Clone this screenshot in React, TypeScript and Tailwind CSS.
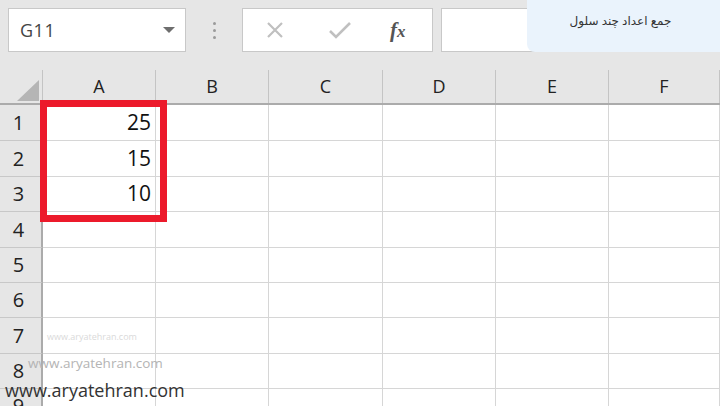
import React from "react";

const cols = [
  { l: "A", w: "w-[113px]" },
  { l: "B", w: "w-[113px]" },
  { l: "C", w: "w-[114px]" },
  { l: "D", w: "w-[113px]" },
  { l: "E", w: "w-[113px]" },
  { l: "F", w: "flex-1" },
];

const rows = [
  { n: "1", h: "h-[36px]", v: "25" },
  { n: "2", h: "h-[36px]", v: "15" },
  { n: "3", h: "h-[35px]", v: "10" },
  { n: "4", h: "h-[36px]", v: "" },
  { n: "5", h: "h-[35px]", v: "" },
  { n: "6", h: "h-[35px]", v: "" },
  { n: "7", h: "h-[36px]", v: "" },
  { n: "8", h: "h-[35px]", v: "" },
  { n: "9", h: "h-[35px]", v: "" },
];

export default function App() {
  return (
    <div
      className="relative w-[720px] h-[406px] overflow-hidden bg-white"
      style={{ fontFamily: '"Open Sans", "Noto Sans", sans-serif' }}
    >
      {/* toolbar */}
      <div className="h-[70px] bg-[#e6e6e6] flex items-start pt-[8px]">
        <div className="ml-[8px] w-[178px] h-[44px] bg-white border border-[#c8c8c8] flex items-center pl-[11px] pr-[10px]">
          <span className="text-[18px] text-[#444] tracking-[0.5px]">G11</span>
          <div className="ml-auto w-0 h-0 border-l-[6px] border-r-[6px] border-t-[6px] border-l-transparent border-r-transparent border-t-[#6e6e6e]" />
        </div>
        <div className="w-[56px] h-[44px] flex flex-col items-center justify-center gap-[4px]">
          <div className="w-[3px] h-[3px] rounded-full bg-[#9a9a9a]" />
          <div className="w-[3px] h-[3px] rounded-full bg-[#9a9a9a]" />
          <div className="w-[3px] h-[3px] rounded-full bg-[#9a9a9a]" />
        </div>
        <div className="w-[191px] h-[44px] bg-white border border-[#c8c8c8] flex items-center">
          <svg className="ml-[23px]" width="18" height="18" viewBox="0 0 18 18">
            <path d="M2 2 L16 16 M16 2 L2 16" stroke="#c0c0c0" strokeWidth="2.2" fill="none" />
          </svg>
          <svg className="ml-[44px]" width="24" height="20" viewBox="0 0 24 20">
            <path d="M2 11 L8 17 L22 3" stroke="#c0c0c0" strokeWidth="2.6" fill="none" />
          </svg>
          <span
            className="ml-[38px] text-[21px] italic font-bold text-[#555] leading-none"
            style={{ fontFamily: '"Liberation Serif", "DejaVu Serif", serif' }}
          >
            f<span className="text-[17px]">x</span>
          </span>
        </div>
        <div className="ml-[8px] flex-1 h-[44px] bg-white border border-[#c8c8c8] border-r-0" />
      </div>

      {/* tooltip bubble */}
      <div className="absolute top-0 left-[527px] w-[193px] h-[52px] bg-[#eaf3fc] rounded-bl-[8px] flex items-center justify-center">
        <span
          dir="rtl"
          className="text-[12px] text-[#333] -mt-[10px] -ml-[6px]"
          style={{ fontFamily: '"Noto Sans", "DejaVu Sans", sans-serif' }}
        >
          جمع اعداد چند سلول
        </span>
      </div>

      {/* header row */}
      <div className="flex h-[35px] bg-[#e6e6e6] border-b-2 border-[#ababab]">
        <div className="w-[43px] h-full border-r border-[#c4c4c4] relative">
          <svg className="absolute left-[17px] top-[10px]" width="22" height="21" viewBox="0 0 22 21">
            <polygon points="22,0 22,21 0,21" fill="#b5b5b5" />
          </svg>
        </div>
        {cols.map((c) => (
          <div
            key={c.l}
            className={`${c.w} h-full border-r border-[#c4c4c4] flex items-center justify-center text-[18px] text-[#222]`}
          >
            {c.l}
          </div>
        ))}
      </div>

      {/* rows */}
      {rows.map((r) => (
        <div key={r.n} className={`flex ${r.h}`}>
          <div className="w-[43px] h-full bg-[#e6e6e6] border-r-2 border-[#ababab] border-b border-b-[#c8c8c8] flex items-center justify-center text-[20px] text-[#222] pr-[4px]">
            {r.n}
          </div>
          {cols.map((c, i) => (
            <div
              key={c.l}
              className={`${c.w} h-full border-r border-b border-[#d6d6d6] flex items-center justify-end pr-[4px] text-[21px] text-[#111]`}
            >
              {i === 0 ? r.v : ""}
            </div>
          ))}
        </div>
      ))}

      {/* red selection box */}
      <div className="absolute left-[40px] top-[100px] w-[127px] h-[122px] border-[7px] border-[#ec1a2b]" />

      {/* watermarks */}
      <div className="absolute left-[47px] top-[330px] text-[9px] text-[#dadada]">www.aryatehran.com</div>
      <div className="absolute left-[28px] top-[353px] text-[13.5px] text-[#b4b4b4]">www.aryatehran.com</div>
      <div className="absolute left-[5px] top-[377px] text-[18px] text-[#333]">www.aryatehran.com</div>
    </div>
  );
}
